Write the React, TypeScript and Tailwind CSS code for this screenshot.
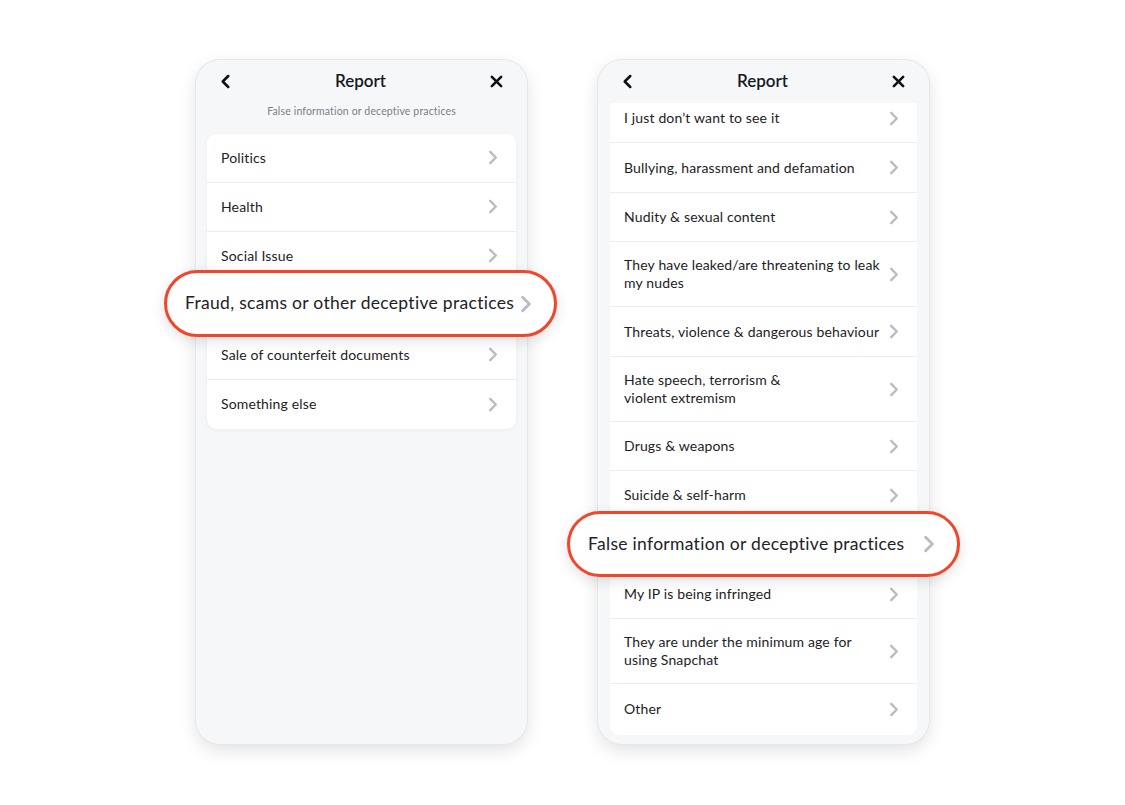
import React from "react";

const font = { fontFamily: "Lato, 'Noto Sans', sans-serif" };

function ChevronRight({ className = "" }: { className?: string }) {
  return (
    <svg viewBox="0 0 10 16" className={className} fill="none">
      <path d="M2 2l6 6-6 6" stroke="#b9bdc3" strokeWidth="2.6" strokeLinecap="round" strokeLinejoin="round" />
    </svg>
  );
}

function Header() {
  return (
    <div className="flex h-[41px] items-center justify-between px-[24px] pt-[1px]">
      <svg viewBox="0 0 12 16" className="h-[15px] w-[11px]" fill="none">
        <path d="M9 2L3 8l6 6" stroke="#111" strokeWidth="2.8" strokeLinecap="round" strokeLinejoin="round" />
      </svg>
      <div className="text-[17px] font-semibold text-[#16191d]">Report</div>
      <svg viewBox="0 0 14 14" className="h-[13px] w-[13px]" fill="none">
        <path d="M2 2l10 10M12 2L2 12" stroke="#111" strokeWidth="2.8" strokeLinecap="round" />
      </svg>
    </div>
  );
}

function Row({ text, h = 49, last = false }: { text?: React.ReactNode; h?: number; last?: boolean }) {
  return (
    <div
      className={`flex items-center justify-between pl-[14px] pr-[18px] ${last ? "" : "border-b border-[#ededef]"}`}
      style={{ height: h }}
    >
      <div className="text-[14px] leading-[18px] tracking-[0.15px] text-[#1e2126]">{text}</div>
      <ChevronRight className="h-[15px] w-[10px] shrink-0" />
    </div>
  );
}

function Pill({ text, className }: { text: string; className: string }) {
  return (
    <div
      className={`absolute flex items-center justify-between rounded-full border-[3px] border-[#f2452a] bg-white pl-[18px] pr-[22px] shadow-[0_4px_14px_rgba(0,0,0,0.12)] ${className}`}
    >
      <div className="text-[17.5px] tracking-[0.3px] text-[#1e2126]">{text}</div>
      <ChevronRight className="h-[18px] w-[12px]" />
    </div>
  );
}

export default function App() {
  return (
    <div className="flex h-[805px] w-[1125px] justify-center gap-[71px] bg-white pt-[60px]" style={font}>
      {/* Left phone */}
      <div className="relative h-[684px] w-[331px] rounded-[24px] bg-[#f6f7f9] shadow-[0_6px_18px_rgba(0,0,0,0.12)] ring-1 ring-[#e6e7ea]">
        <Header />
        <div className="mt-[3px] text-center text-[10.5px] tracking-[0.15px] text-[#7b7f86]">False information or deceptive practices</div>
        <div className="mx-[11px] mt-[14px] overflow-hidden rounded-[9px] bg-white shadow-[0_1px_4px_rgba(0,0,0,0.05)]">
          <Row text="Politics" />
          <Row text="Health" />
          <Row text="Social Issue" />
          <Row h={50} />
          <Row text="Sale of counterfeit documents" />
          <Row text="Something else" last />
        </div>
        <Pill text="Fraud, scams or other deceptive practices" className="left-[-32px] top-[210px] h-[67px] w-[393px]" />
      </div>

      {/* Right phone */}
      <div className="relative flex h-[684px] w-[331px] flex-col rounded-[24px] bg-[#f6f7f9] shadow-[0_6px_18px_rgba(0,0,0,0.12)] ring-1 ring-[#e6e7ea]">
        <div className="h-[43px]">
          <Header />
        </div>
        <div className="mx-[12px] h-[632px] overflow-hidden rounded-b-[9px] bg-white">
          <div className="mt-[-9px]">
            <Row text="I just don’t want to see it" h={49} />
            <Row text="Bullying, harassment and defamation" h={50} />
            <Row text="Nudity & sexual content" h={49} />
            <Row text={<>They have leaked/are threatening to leak<br />my nudes</>} h={65} />
            <Row text="Threats, violence & dangerous behaviour" h={50} />
            <Row text={<>Hate speech, terrorism &amp;<br />violent extremism</>} h={65} />
            <Row text="Drugs & weapons" h={49} />
            <Row text="Suicide & self-harm" h={49} />
            <Row h={50} />
            <Row text="My IP is being infringed" h={49} />
            <Row text={<>They are under the minimum age for<br />using Snapchat</>} h={65} />
            <Row text="Other" h={50} last />
          </div>
        </div>
        <Pill text="False information or deceptive practices" className="left-[-31px] top-[451px] h-[66px] w-[393px]" />
      </div>
    </div>
  );
}
